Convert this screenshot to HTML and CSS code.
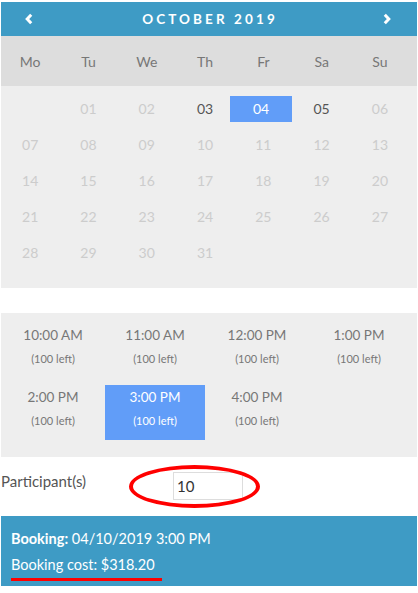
FILE: index.html
```html
<!DOCTYPE html>
<html>
<head>
    <title>Booking</title>
    <meta charset="UTF-8">
    <meta name="viewport" content="width=device-width, initial-scale=1.0">
    <link rel="stylesheet" href="styles.css">
</head>
<body>
    <div class="widget">
        <div class="calendar">
            <div class="cal-head">
                <svg class="arrow" width="8" height="12" viewBox="0 0 8 12"><path d="M6.2 1.8 L2.2 6 L6.2 10.2" fill="none" stroke="#fff" stroke-width="3"/></svg>
                <span class="month">OCTOBER 2019</span>
                <svg class="arrow" width="8" height="12" viewBox="0 0 8 12"><path d="M1.8 1.8 L5.8 6 L1.8 10.2" fill="none" stroke="#fff" stroke-width="3"/></svg>
            </div>
            <div class="weekdays">
                <span>Mo</span><span>Tu</span><span>We</span><span>Th</span><span>Fr</span><span>Sa</span><span>Su</span>
            </div>
            <div class="days">
                <span></span>
                <span class="off">01</span>
                <span class="off">02</span>
                <span>03</span>
                <span class="sel">04</span>
                <span>05</span>
                <span class="off">06</span>
                <span class="off">07</span>
                <span class="off">08</span>
                <span class="off">09</span>
                <span class="off">10</span>
                <span class="off">11</span>
                <span class="off">12</span>
                <span class="off">13</span>
                <span class="off">14</span>
                <span class="off">15</span>
                <span class="off">16</span>
                <span class="off">17</span>
                <span class="off">18</span>
                <span class="off">19</span>
                <span class="off">20</span>
                <span class="off">21</span>
                <span class="off">22</span>
                <span class="off">23</span>
                <span class="off">24</span>
                <span class="off">25</span>
                <span class="off">26</span>
                <span class="off">27</span>
                <span class="off">28</span>
                <span class="off">29</span>
                <span class="off">30</span>
                <span class="off">31</span>
            </div>
        </div>

        <div class="slots">
            <div class="slot"><span class="time">10:00 AM</span><span class="left">(100 left)</span></div>
            <div class="slot"><span class="time">11:00 AM</span><span class="left">(100 left)</span></div>
            <div class="slot"><span class="time">12:00 PM</span><span class="left">(100 left)</span></div>
            <div class="slot"><span class="time">1:00 PM</span><span class="left">(100 left)</span></div>
            <div class="slot"><span class="time">2:00 PM</span><span class="left">(100 left)</span></div>
            <div class="slot active"><span class="time">3:00 PM</span><span class="left">(100 left)</span></div>
            <div class="slot"><span class="time">4:00 PM</span><span class="left">(100 left)</span></div>
        </div>

        <div class="participants">
            <label for="count">Participant(s)</label>
            <input type="text" id="count" value="10">
            <div class="circle"></div>
        </div>

        <div class="booking">
            <p><b>Booking:</b> 04/10/2019 3:00 PM</p>
            <p><span class="cost">Booking cost: $318.20</span></p>
        </div>
    </div>
</body>
</html>
```

FILE: styles.css
```css
body {
    margin: 0;
    font-family: Lato, 'Open Sans', sans-serif;
    background-color: #fff;
}

.widget {
    padding: 2px 1px 0;
}

.cal-head {
    background-color: #3e9bc5;
    height: 34px;
    display: flex;
    align-items: center;
    justify-content: space-between;
    padding: 0 26px 0 24px;
}

.month {
    color: #fff;
    font-size: 13.5px;
    font-weight: bold;
    letter-spacing: 3.1px;
    margin-left: 4px;
}

.weekdays {
    background-color: #dddddd;
    height: 50px;
    display: grid;
    grid-template-columns: repeat(7, 58.3px);
    align-items: center;
    color: #777;
    font-size: 14px;
}

.weekdays span,
.days span {
    text-align: center;
}

.days {
    background-color: #eeeeee;
    display: grid;
    grid-template-columns: repeat(7, 58.3px);
    grid-auto-rows: 26px;
    row-gap: 10px;
    padding: 10px 0 22px 0;
    font-size: 14px;
    color: #555;
}

.days span {
    line-height: 26px;
}

.days .off {
    color: #ccc;
}

.days .sel {
    background-color: #619df8;
    color: #fff;
    margin: 0 0.5px 0 -4px;
}

.slots {
    margin-top: 25px;
    background-color: #eeeeee;
    display: grid;
    grid-template-columns: repeat(4, 100px);
    grid-auto-rows: 55px;
    column-gap: 2px;
    row-gap: 7px;
    padding: 10px 0 17px 2px;
}

.slot {
    display: flex;
    flex-direction: column;
    align-items: center;
    color: #777;
}

.slot .time {
    font-size: 13.5px;
    margin-top: 4px;
}

.slot .left {
    font-size: 11px;
    margin-top: 9px;
}

.slot.active {
    background-color: #619df8;
    color: #fff;
}

.participants {
    position: relative;
    display: flex;
    align-items: flex-start;
    margin-top: 15px;
    height: 44px;
}

.participants label {
    width: 172px;
    font-size: 15px;
    color: #555;
}

.participants input {
    width: 70px;
    height: 28px;
    box-sizing: border-box;
    border: 1px solid #ddd;
    padding: 0 3px;
    font-family: inherit;
    font-size: 15px;
    color: #333;
    margin: 0;
}

.circle {
    position: absolute;
    left: 128px;
    top: -7px;
    width: 131px;
    height: 43px;
    box-sizing: border-box;
    border: 4px solid #f00;
    border-radius: 50%;
}

.booking {
    background-color: #3e9bc5;
    color: #fff;
    font-size: 14.5px;
    padding: 14px 10px 0;
    height: 70px;
    box-sizing: border-box;
}

.booking p {
    margin: 0 0 9px;
}

.cost {
    display: inline-block;
    padding-right: 7px;
    padding-bottom: 5px;
    border-bottom: 3px solid #f00;
}
```
